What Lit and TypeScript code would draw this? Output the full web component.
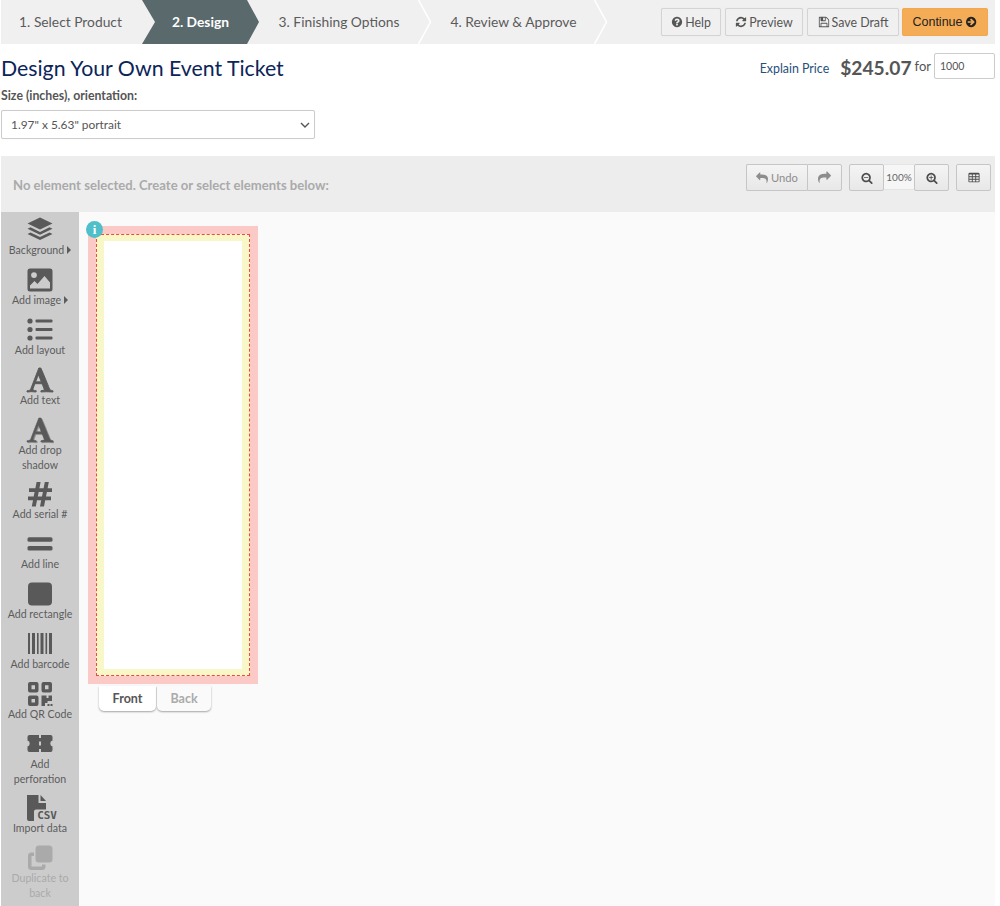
import { LitElement, html, css, svg } from "lit";
import { customElement } from "lit/decorators.js";

const P = {
  q: "M1024 1376v-192q0-14-9-23t-23-9h-192q-14 0-23 9t-9 23v192q0 14 9 23t23 9h192q14 0 23-9t9-23zm256-672q0-88-55.5-163t-138.5-116-170-41q-243 0-371 213-15 24 8 42l132 100q7 6 19 6 16 0 25-12 53-68 86-92 34-24 86-24 48 0 85.5 26t37.5 59q0 38-20 61t-68 45q-63 28-115.5 86.5t-52.5 125.5v36q0 14 9 23t23 9h192q14 0 23-9t9-23q0-19 21.5-49.5t54.5-49.5q32-18 49-28.5t46-35 44.5-48 28-60.5 12.5-81zm384 192q0 209-103 385.5t-279.5 279.5-385.5 103-385.5-103-279.5-279.5-103-385.5 103-385.5 279.5-279.5 385.5-103 385.5 103 279.5 279.5 103 385.5z",
  refresh: "M1639 1056q0 5-1 7-64 268-268 434.5t-478 166.5q-146 0-282.5-55t-243.5-157l-129 129q-19 19-45 19t-45-19-19-45v-448q0-26 19-45t45-19h448q26 0 45 19t19 45-19 45l-137 137q71 66 161 102t187 36q134 0 250-65t186-179q11-17 53-117 8-23 30-23h192q13 0 22.5 9.5t9.5 22.5zm25-800v448q0 26-19 45t-45 19h-448q-26 0-45-19t-19-45 19-45l138-138q-148-137-349-137-134 0-250 65t-186 179q-11 17-53 117-8 23-30 23h-199q-13 0-22.5-9.5t-9.5-22.5v-7q65-268 270-434.5t480-166.5q146 0 284 55.5t245 156.5l130-129q19-19 45-19t45 19 19 45z",
  save: "M512 1536h768v-384h-768v384zm896 0h128v-896q0-14-10-38.5t-20-34.5l-281-281q-10-10-34-20t-39-10v416q0 40-28 68t-68 28h-576q-40 0-68-28t-28-68v-416h-128v1280h128v-416q0-40 28-68t68-28h832q40 0 68 28t28 68v416zm-384-928v-320q0-13-9.5-22.5t-22.5-9.5h-192q-13 0-22.5 9.5t-9.5 22.5v320q0 13 9.5 22.5t22.5 9.5h192q13 0 22.5-9.5t9.5-22.5zm640 32v928q0 40-28 68t-68 28h-1344q-40 0-68-28t-28-68v-1344q0-40 28-68t68-28h928q40 0 88 20t76 48l280 280q28 28 48 76t20 88z",
  arrow: "M1285 896q0-27-18-45l-91-91-362-362q-18-18-45-18t-45 18l-91 91q-18 18-18 45t18 45l189 189h-502q-26 0-45 19t-19 45v128q0 26 19 45t45 19h502l-189 189q-19 19-19 45t19 45l91 91q18 18 45 18t45-18l362-362 91-91q18-18 18-45zm251 0q0 209-103 385.5t-279.5 279.5-385.5 103-385.5-103-279.5-279.5-103-385.5 103-385.5 279.5-279.5 385.5-103 385.5 103 279.5 279.5 103 385.5z",
  reply: "M1792 1120q0 166-127 451-3 7-10.5 24t-13.5 30-13 22q-12 17-28 17-15 0-23.5-10t-8.5-25q0-9 2.5-26.5t2.5-23.5q5-68 5-123 0-101-17.5-181t-48.5-138.5-80-101-105.5-69.5-133-42.5-154-21.5-175.5-6h-224v256q0 26-19 45t-45 19-45-19l-512-512q-19-19-19-45t19-45l512-512q19-19 45-19t45 19 19 45v256h224q713 0 875 403 53 134 53 333z",
  share: "M1792 640q0 26-19 45l-512 512q-19 19-45 19t-45-19-19-45v-256h-224q-98 0-175.5 6t-154 21.5-133 42.5-105.5 69.5-80 101-48.5 138.5-17.5 181q0 55 5 123 0 6 2.5 23.5t2.5 26.5q0 15-8.5 25t-23.5 10q-16 0-28-17-7-9-13-22t-13.5-30-10.5-24q-127-285-127-451 0-199 53-333 162-403 875-403h224v-256q0-26 19-45t45-19 45 19l512 512q19 19 19 45z",
  zoomIn: "M1088 800v64q0 13-9.5 22.5t-22.5 9.5h-224v224q0 13-9.5 22.5t-22.5 9.5h-64q-13 0-22.5-9.5t-9.5-22.5v-224h-224q-13 0-22.5-9.5t-9.5-22.5v-64q0-13 9.5-22.5t22.5-9.5h224v-224q0-13 9.5-22.5t22.5-9.5h64q13 0 22.5 9.5t9.5 22.5v224h224q13 0 22.5 9.5t9.5 22.5zm128 32q0-185-131.5-316.5t-316.5-131.5-316.5 131.5-131.5 316.5 131.5 316.5 316.5 131.5 316.5-131.5 131.5-316.5zm512 832q0 53-37.5 90.5t-90.5 37.5q-54 0-90-38l-343-342q-179 124-399 124-143 0-273.5-55.5t-225-150-150-225-55.5-273.5 55.5-273.5 150-225 225-150 273.5-55.5 273.5 55.5 225 150 150 225 55.5 273.5q0 220-124 399l343 343q37 37 37 90z",
  zoomOut: "M1088 800v64q0 13-9.5 22.5t-22.5 9.5h-576q-13 0-22.5-9.5t-9.5-22.5v-64q0-13 9.5-22.5t22.5-9.5h576q13 0 22.5 9.5t9.5 22.5zm128 32q0-185-131.5-316.5t-316.5-131.5-316.5 131.5-131.5 316.5 131.5 316.5 316.5 131.5 316.5-131.5 131.5-316.5zm512 832q0 53-37.5 90.5t-90.5 37.5q-54 0-90-38l-343-342q-179 124-399 124-143 0-273.5-55.5t-225-150-150-225-55.5-273.5 55.5-273.5 150-225 225-150 273.5-55.5 273.5 55.5 225 150 150 225 55.5 273.5q0 220-124 399l343 343q37 37 37 90z",
  table: "M576 1376v-192q0-14-9-23t-23-9h-320q-14 0-23 9t-9 23v192q0 14 9 23t23 9h320q14 0 23-9t9-23zm0-384v-192q0-14-9-23t-23-9h-320q-14 0-23 9t-9 23v192q0 14 9 23t23 9h320q14 0 23-9t9-23zm512 384v-192q0-14-9-23t-23-9h-320q-14 0-23 9t-9 23v192q0 14 9 23t23 9h320q14 0 23-9t9-23zm-512-768v-192q0-14-9-23t-23-9h-320q-14 0-23 9t-9 23v192q0 14 9 23t23 9h320q14 0 23-9t9-23zm512 384v-192q0-14-9-23t-23-9h-320q-14 0-23 9t-9 23v192q0 14 9 23t23 9h320q14 0 23-9t9-23zm512 384v-192q0-14-9-23t-23-9h-320q-14 0-23 9t-9 23v192q0 14 9 23t23 9h320q14 0 23-9t9-23zm-512-768v-192q0-14-9-23t-23-9h-320q-14 0-23 9t-9 23v192q0 14 9 23t23 9h320q14 0 23-9t9-23zm512 384v-192q0-14-9-23t-23-9h-320q-14 0-23 9t-9 23v192q0 14 9 23t23 9h320q14 0 23-9t9-23zm0-384v-192q0-14-9-23t-23-9h-320q-14 0-23 9t-9 23v192q0 14 9 23t23 9h320q14 0 23-9t9-23zm128-320v1088q0 66-47 113t-113 47h-1344q-66 0-113-47t-47-113v-1088q0-66 47-113t113-47h1344q66 0 113 47t47 113z",
  font: "M789 559l-170 450q33 0 136.5 2t160.5 2q19 0 57-2-87-253-184-452zm-725 1105l2-79q23-7 56-12.5t57-10.5 49.5-14.5 44.5-29 31-50.5l237-616 280-724h128q8 14 11 21l205 480q33 78 106 257.5t114 274.5q15 34 58 144.5t72 168.5q20 45 35 57 19 15 88 29.5t84 20.5q6 38 6 57 0 5-.5 13.5t-.5 12.5q-63 0-190-8t-191-8q-76 0-215 7t-178 8q0-43 4-78l131-28q1 0 12.5-2.5t15.5-3.5 14.5-4.5 15-6.5 11-8 9-11 2.5-14q0-16-31-96.5t-72-177.5-42-100l-450-2q-26 58-76.5 195.5t-50.5 162.5q0 22 14 37.5t43.5 24.5 48.5 13.5 57 8.5 41 4q1 19 1 58 0 9-2 27-58 0-174.5-10t-174.5-10q-8 0-26.5 4t-21.5 4q-80 14-188 14z",
};

const fa = (d: string, cls = "ico") => html`<svg class=${cls} viewBox="0 0 1792 1792" aria-hidden="true"><path d=${d} fill="currentColor"/></svg>`;

const box = (inner: unknown) => html`<svg class="tool-ico" viewBox="0 0 28 28" aria-hidden="true">${inner}</svg>`;

const tools = [
  { label: ["Background"], caret: true, icon: box(svg`
    <path d="M14 1.5 26.5 7.5 14 13.5 1.5 7.5Z"/>
    <path d="M4.5 11.3 14 15.9 23.5 11.3 26.5 12.8 14 18.8 1.5 12.8Z"/>
    <path d="M4.5 16.5 14 21.1 23.5 16.5 26.5 18 14 24 1.5 18Z"/>`) },
  { label: ["Add image"], caret: true, icon: box(svg`
    <path fill-rule="evenodd" d="M4 2.5H24A2.5 2.5 0 0 1 26.5 5V23A2.5 2.5 0 0 1 24 25.5H4A2.5 2.5 0 0 1 1.5 23V5A2.5 2.5 0 0 1 4 2.5ZM8 6.2A2.9 2.9 0 1 0 8 12 2.9 2.9 0 0 0 8 6.2ZM4 22.5H24V16.5L18.5 10 11.5 18 8.5 15 4 19.5Z"/>`) },
  { label: ["Add layout"], icon: box(svg`
    <circle cx="4" cy="5" r="2.6"/><circle cx="4" cy="13.5" r="2.6"/><circle cx="4" cy="22" r="2.6"/>
    <rect x="9.5" y="3.5" width="17" height="3" rx="1"/><rect x="9.5" y="12" width="17" height="3" rx="1"/><rect x="9.5" y="20.5" width="17" height="3" rx="1"/>`) },
  { label: ["Add text"], icon: html`<svg class="tool-ico" viewBox="0 0 1792 1792" aria-hidden="true"><path d=${P.font} stroke="#595959" stroke-width="60" stroke-linejoin="round"/></svg>` },
  { label: ["Add drop", "shadow"], two: true, icon: html`<svg class="tool-ico" viewBox="0 0 1792 1792" aria-hidden="true"><path d=${P.font} fill="#8f8f8f" stroke="#8f8f8f" stroke-width="40" stroke-linejoin="round" transform="translate(70 50)"/><path d=${P.font} stroke="#595959" stroke-width="40" stroke-linejoin="round"/></svg>` },
  { label: ["Add serial #"], icon: box(svg`
    <path d="M10.6 2h4L13.4 8.2H17.6L18.8 2h4L21.6 8.2H26V12H20.9L20 16.5H25V20.3H19.2L18 26.5H14L15.2 20.3H11L9.8 26.5H5.8L7 20.3H2V16.5H7.7L8.6 12H3V8.2H9.4ZM12.7 12 11.8 16.5H16L16.9 12Z" fill-rule="evenodd"/>`) },
  { label: ["Add line"], icon: box(svg`
    <rect x="1.5" y="7.2" width="25" height="4.6" rx="1.6"/><rect x="1.5" y="16" width="25" height="4.6" rx="1.6"/>`) },
  { label: ["Add rectangle"], icon: box(svg`<rect x="2" y="2.5" width="24" height="23" rx="4"/>`) },
  { label: ["Add barcode"], icon: box(svg`
    <rect x="2" y="3" width="2" height="21"/><rect x="6" y="3" width="3" height="21"/><rect x="11" y="3" width="1.6" height="21"/>
    <rect x="14.5" y="3" width="3" height="21"/><rect x="19.5" y="3" width="1.6" height="21"/><rect x="23" y="3" width="3" height="21"/>`) },
  { label: ["Add QR Code"], icon: box(svg`
    <path fill-rule="evenodd" d="M4 2H10.5A2 2 0 0 1 12.5 4V10.5A2 2 0 0 1 10.5 12.5H4A2 2 0 0 1 2 10.5V4A2 2 0 0 1 4 2ZM5.5 5.3V9.2H9V5.3Z"/>
    <path fill-rule="evenodd" d="M17.5 2H24A2 2 0 0 1 26 4V10.5A2 2 0 0 1 24 12.5H17.5A2 2 0 0 1 15.5 10.5V4A2 2 0 0 1 17.5 2ZM19 5.3V9.2H22.5V5.3Z"/>
    <path fill-rule="evenodd" d="M4 15.5H10.5A2 2 0 0 1 12.5 17.5V24A2 2 0 0 1 10.5 26H4A2 2 0 0 1 2 24V17.5A2 2 0 0 1 4 15.5ZM5.5 19V22.5H9V19Z"/>
    <path d="M15.5 15.5H20.5V18H22.5V15.5H26V21H21.5V23H19V26H15.5Z"/><rect x="21.5" y="24" width="2" height="2"/><rect x="24.5" y="24" width="2" height="2"/>`) },
  { label: ["Add", "perforation"], two: true, icon: box(svg`
    <path fill-rule="evenodd" d="M3.5 5H24.5A2 2 0 0 1 26.5 7V10.6A3 3 0 0 0 26.5 16.4V20A2 2 0 0 1 24.5 22H3.5A2 2 0 0 1 1.5 20V16.4A3 3 0 0 0 1.5 10.6V7A2 2 0 0 1 3.5 5Z M13 5V8H15V5Z M13 11.5V15.5H15V11.5Z M13 19V22H15V19Z"/>`) },
  { label: ["Import data"], csv: true, icon: box(svg`
    <path d="M1 1H12.5V9H20V15.5H10A2 2 0 0 0 8 17.5V27H3A2 2 0 0 1 1 25Z"/><path d="M14.5 1 20 7H14.5Z"/>`) },
  { label: ["Duplicate to", "back"], two: true, dim: true, icon: box(svg`
    <rect x="9.5" y="1.5" width="17" height="17" rx="3.5"/>
    <path fill-rule="evenodd" d="M6 8.5H8V12H5.5V22.5H16V20.5H19.5V22.5A3.5 3.5 0 0 1 16 26H5.5A3.5 3.5 0 0 1 2 22.5V12A3.5 3.5 0 0 1 5.5 8.5Z"/>`) },
];

@customElement("app-root")
export class AppRoot extends LitElement {
  static styles = css`
    :host { display: block; width: 994px; height: 906px; margin-left: 1px; font-family: Lato, "Liberation Sans", sans-serif; color: #555; background: #fff; overflow: hidden; }
    * { box-sizing: border-box; }
    .top { display: flex; justify-content: space-between; height: 44px; background: #f0f0f0; }
    .steps { display: flex; height: 44px; }
    .step { position: relative; display: flex; align-items: center; justify-content: center; height: 44px; padding-bottom: 1px; font-size: 13.8px; color: #5b5b5b; white-space: nowrap; }
    .s1 { width: 141px; padding-right: 2px; }
    .s2 { width: 117px; color: #fff; font-weight: 700; background: #5a696c; clip-path: polygon(0 0, 105px 0, 117px 22px, 105px 44px, 0 44px, 13px 22px); }
    .s3 { width: 160px; }
    .s4 { width: 176px; padding-left: 13px; }
    .chev { position: absolute; right: -13px; top: 0; width: 14px; height: 44px; }
    .chev path { fill: none; stroke: #fff; stroke-width: 1.5; }
    .actions { display: flex; align-items: flex-start; gap: 4px; padding: 8px 7px 0 0; }
    .btn { display: flex; align-items: center; justify-content: center; gap: 2px; height: 28px; font-size: 12.4px; color: #555; border: 1px solid #d4d4d4; border-radius: 2px; background: #f0f0f0; box-shadow: 0 0 1px rgba(0,0,0,.1); }
    .ico { width: 12px; height: 12px; flex: none; }
    .help { width: 60px; } .preview { width: 78px; } .draft { width: 92px; }
    .go { width: 86px; margin-left: -1px; color: #222; background: #f4ac57; border-color: #f3a74e; font-family: "Liberation Sans", sans-serif; font-size: 12.5px; gap: 3px; }
    .head { display: flex; justify-content: space-between; height: 37px; }
    h1 { margin: 11px 0 0; font-size: 21.3px; line-height: 26px; font-weight: 400; color: #0b2559; }
    .price { display: flex; align-items: center; height: 35px; padding-top: 9px; }
    .explain { font-size: 12.4px; color: #26507c; margin-right: 11px; margin-top: 5px; }
    .amount { font-size: 19.2px; font-weight: 700; color: #555; margin-right: 3px; margin-top: 2px; }
    .for { font-size: 13px; color: #555; margin-right: 3px; }
    .qty { display: flex; align-items: center; width: 61px; height: 26px; padding-left: 5px; font-size: 10.5px; color: #555; border: 1px solid #ccc; border-radius: 2px; background: #fff; }
    .lab { margin-top: 6px; font-size: 12.3px; line-height: 18px; font-weight: 700; color: #555; }
    .sel { display: flex; align-items: center; justify-content: space-between; width: 314px; height: 29px; margin-top: 5px; padding: 0 4px 0 9px; font-size: 11.9px; color: #555; border: 1px solid #ccc; border-radius: 2px; background: #fff; box-shadow: 0 0 1px rgba(0,0,0,.1); }
    .sel svg { width: 10px; height: 6px; }
    .bar { display: flex; justify-content: space-between; height: 56px; margin-top: 17px; background: #ededed; }
    .status { margin: 22px 0 0 12px; font-size: 13.1px; line-height: 15px; font-weight: 700; color: #aaa; }
    .tools { display: flex; gap: 7px; padding: 8px 4px 0 0; align-items: flex-start; }
    .grp { display: flex; }
    .tb { display: flex; align-items: center; justify-content: center; gap: 3px; height: 27px; font-size: 11.2px; color: #8d8d8d; border: 1px solid #c6c6c6; border-radius: 2px; background: linear-gradient(#f4f4f4, #e8e8e8); }
    .tb .ico { width: 12px; height: 12px; }
    .dark { color: #4c4c4c; }
    .undo { width: 61px; border-radius: 2px 0 0 2px; border-right-width: 0; }
    .redo { width: 35px; border-radius: 0 2px 2px 0; }
    .redo .ico { width: 13px; height: 13px; }
    .w35 { width: 35px; }
    .pct { display: flex; align-items: center; justify-content: center; width: 30px; height: 26px; font-size: 10px; color: #666; background: #f6f6f6; border-top: 1px solid #e4e4e4; border-bottom: 1px solid #e4e4e4; }
    .work { display: flex; height: 694px; background: #fafafa; }
    .side { display: flex; flex-direction: column; width: 78px; padding-top: 4px; background: #ccc; }
    .tool { display: flex; flex-direction: column; align-items: center; padding-bottom: 8px; font-size: 10.6px; line-height: 15px; color: #5c5c5c; text-align: center; white-space: nowrap; }
    .tool.two { padding-bottom: 7px; }
    .tool.dim { color: #aaa; }
    .tool-wrap { position: relative; display: flex; justify-content: center; width: 28px; height: 28px; margin-bottom: -1px; }
    .tool-ico { width: 28px; height: 28px; fill: #595959; display: block; }
    .tool.dim .tool-ico { fill: #aaa; }
    .caret { display: inline-block; margin-left: 3px; width: 0; height: 0; border-left: 4px solid #5c5c5c; border-top: 4px solid transparent; border-bottom: 4px solid transparent; }
    .csv { position: absolute; right: -3px; bottom: 1px; font: 700 11px/10px "DejaVu Sans Mono", monospace; color: #595959; }
    .canvas { flex: 1; padding: 14px 0 0 9px; }
    .bleed { position: relative; width: 170px; height: 458px; padding: 8px; background: #fbc9c6; }
    .cut { height: 100%; padding: 6px 7px; border: 1px dashed #f0483f; background: #f7f7c8; }
    .safe { height: 100%; background: #fff; }
    .info { position: absolute; left: -2px; top: -5px; width: 17px; height: 17px; border-radius: 50%; background: #4fbfc9; color: #fff; font: 700 13px/17px "Liberation Serif", serif; text-align: center; }
    .tabs { display: flex; gap: 1px; margin: 2px 0 0 11px; }
    .tab { display: flex; align-items: center; justify-content: center; height: 25px; font-size: 12.5px; font-weight: 700; background: #fff; color: #555; border-radius: 0 0 5px 5px; box-shadow: 0 1px 2px rgba(0,0,0,.35); }
    .tab.f { width: 57px; }
    .tab.b { width: 54px; color: #aaa; background: #fafafa; }
  `;

  render() {
    const chev = html`<svg class="chev" viewBox="0 0 14 44" aria-hidden="true"><path d="M.5 0 12.5 22 .5 44"/></svg>`;
    return html`
      <div class="top">
        <div class="steps">
          <div class="step s1">1. Select Product</div>
          <div class="step s2">2. Design</div>
          <div class="step s3">3. Finishing Options${chev}</div>
          <div class="step s4">4. Review &amp; Approve${chev}</div>
        </div>
        <div class="actions">
          <div class="btn help">${fa(P.q)}Help</div>
          <div class="btn preview">${fa(P.refresh)}Preview</div>
          <div class="btn draft">${fa(P.save)}Save Draft</div>
          <div class="btn go">Continue${fa(P.arrow)}</div>
        </div>
      </div>
      <div class="head">
        <h1>Design Your Own Event Ticket</h1>
        <div class="price">
          <span class="explain">Explain Price</span>
          <span class="amount">$245.07</span>
          <span class="for">for</span>
          <div class="qty">1000</div>
        </div>
      </div>
      <div class="lab">Size (inches), orientation:</div>
      <div class="sel"><span>1.97" x 5.63" portrait</span>
        <svg viewBox="0 0 10 6" aria-hidden="true"><path d="M1 1 5 5 9 1" fill="none" stroke="#555" stroke-width="1.4"/></svg>
      </div>
      <div class="bar">
        <div class="status">No element selected. Create or select elements below:</div>
        <div class="tools">
          <div class="grp">
            <div class="tb undo">${fa(P.reply)}Undo</div>
            <div class="tb redo">${fa(P.share)}</div>
          </div>
          <div class="grp">
            <div class="tb w35 dark">${fa(P.zoomOut)}</div>
            <div class="pct">100%</div>
            <div class="tb w35 dark">${fa(P.zoomIn)}</div>
          </div>
          <div class="tb w35 dark">${fa(P.table)}</div>
        </div>
      </div>
      <div class="work">
        <div class="side">
          ${tools.map((t) => html`
            <div class="tool ${t.dim ? "dim" : ""} ${t.two ? "two" : ""}">
              <div class="tool-wrap">${t.icon}${t.csv ? html`<span class="csv">CSV</span>` : ""}</div>
              ${t.label.map((l) => html`<div>${l}${t.caret ? html`<span class="caret"></span>` : ""}</div>`)}
            </div>`)}
        </div>
        <div class="canvas">
          <div class="bleed">
            <div class="cut"><div class="safe"></div></div>
            <div class="info">i</div>
          </div>
          <div class="tabs">
            <div class="tab f">Front</div>
            <div class="tab b">Back</div>
          </div>
        </div>
      </div>
    `;
  }
}
